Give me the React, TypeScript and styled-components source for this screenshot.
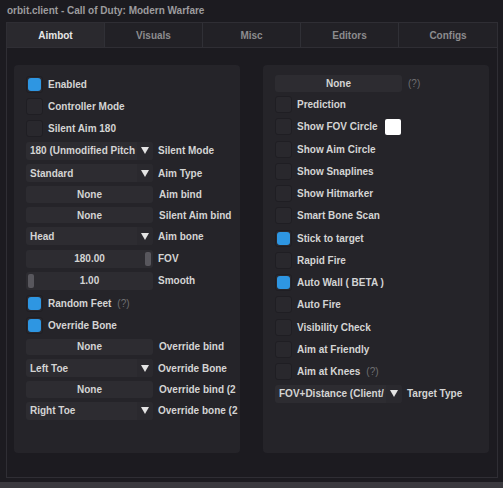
import React from "react";
import styled, { createGlobalStyle } from "styled-components";

const GlobalStyle = createGlobalStyle`
  html, body { margin: 0; padding: 0; background: #1c1b20; }
  body { font-family: "Liberation Sans", Arial, sans-serif; font-weight: 700; font-size: 10px; color: #d4d4d4; }
  * { box-sizing: border-box; }
`;

const Window = styled.div`
  width: 503px;
  height: 488px;
  display: flex;
  flex-direction: column;
  background: #1c1b20;
  overflow: hidden;
`;

const TitleBar = styled.div`
  height: 22px;
  padding-left: 7px;
  line-height: 22px;
  color: #9c9c9e;
  white-space: nowrap;
`;

const Frame = styled.div`
  margin: 0 5px 0 6px;
  height: 458px;
  border: 1px solid #2f2e34;
  display: flex;
  flex-direction: column;
`;

const TabBar = styled.div`
  display: grid;
  grid-template-columns: repeat(5, 1fr);
  height: 25px;
  border-bottom: 1px solid #2f2e34;
`;

const Tab = styled.div<{ $active?: boolean }>`
  display: flex;
  align-items: center;
  justify-content: center;
  background: ${(p) => (p.$active ? "#2a292e" : "#222126")};
  color: ${(p) => (p.$active ? "#e6e6e6" : "#8c8c8e")};
  border-right: 1px solid #303036;
  &:last-child { border-right: none; }
`;

const Content = styled.div`
  display: flex;
  gap: 23px;
  padding: 17px 0 0 7px;
`;

const Panel = styled.div`
  width: 226px;
  height: 388px;
  background: #252429;
  border-radius: 4px;
  padding: 10px 2px 0 12px;
  display: flex;
  flex-direction: column;
  gap: 4px;
  overflow: hidden;
`;

const Row = styled.div<{ $h?: number }>`
  height: ${(p) => p.$h ?? 18.25}px;
  display: flex;
  align-items: center;
  white-space: nowrap;
  flex-shrink: 0;
`;

const Box = styled.div`
  width: 17px;
  height: 17px;
  border-radius: 3px;
  background: #29282d;
  border: 1px solid #1f1e23;
  display: flex;
  align-items: center;
  justify-content: center;
  flex-shrink: 0;
`;

const Tick = styled.div`
  width: 13px;
  height: 13px;
  border-radius: 3px;
  background: #2e96e2;
`;

const CheckLabel = styled.span`
  margin-left: 5px;
`;

const Help = styled.span`
  margin-left: 6px;
  color: #6f6f72;
  font-weight: 400;
`;

const Swatch = styled.div`
  margin-left: 7px;
  width: 16px;
  height: 16px;
  border-radius: 2px;
  background: #ffffff;
`;

const WidgetLabel = styled.span<{ $offset?: number }>`
  margin-left: ${(p) => p.$offset ?? 5}px;
`;

const ButtonFrame = styled.div`
  width: 127px;
  height: 16.5px;
  background: #2d2c31;
  border-radius: 3px;
  display: flex;
  align-items: center;
  justify-content: center;
  flex-shrink: 0;
`;

const ComboFrame = styled.div`
  width: 127px;
  height: 18px;
  background: #2d2c31;
  border-radius: 3px;
  display: flex;
  align-items: center;
  flex-shrink: 0;
  overflow: hidden;
`;

const ComboText = styled.span`
  flex: 1;
  min-width: 0;
  padding-left: 4px;
  overflow: hidden;
  white-space: nowrap;
`;

const ComboArrow = styled.div`
  width: 16px;
  height: 18px;
  background: #2a292e;
  display: flex;
  align-items: center;
  justify-content: center;
  flex-shrink: 0;
`;

const SliderFrame = styled.div`
  position: relative;
  width: 127px;
  height: 18px;
  background: #2d2c31;
  border-radius: 3px;
  display: flex;
  align-items: center;
  justify-content: center;
  flex-shrink: 0;
`;

const Grab = styled.div<{ $right?: boolean }>`
  position: absolute;
  top: 2px;
  ${(p) => (p.$right ? "right: 2px;" : "left: 2px;")}
  width: 6px;
  height: 14px;
  border-radius: 2px;
  background: #58575d;
`;

const Strip = styled.div`
  margin-top: 4px;
  height: 6px;
  background: #3a393e;
`;

const Arrow = () => (
  <svg width="8" height="7" viewBox="0 0 8 7">
    <polygon points="0,0 8,0 4,7" fill="#e4e4e4" />
  </svg>
);

const Check = ({ label, checked, help, swatch }: { label: string; checked?: boolean; help?: boolean; swatch?: boolean }) => (
  <Row>
    <Box>{checked && <Tick />}</Box>
    <CheckLabel>{label}</CheckLabel>
    {help && <Help>(?)</Help>}
    {swatch && <Swatch />}
  </Row>
);

const Button = ({ text, label, help }: { text: string; label?: string; help?: boolean }) => (
  <Row $h={16.5}>
    <ButtonFrame>{text}</ButtonFrame>
    {label && <WidgetLabel $offset={6}>{label}</WidgetLabel>}
    {help && <Help>(?)</Help>}
  </Row>
);

const Combo = ({ value, label }: { value: string; label: string }) => (
  <Row>
    <ComboFrame>
      <ComboText>{value}</ComboText>
      <ComboArrow>
        <Arrow />
      </ComboArrow>
    </ComboFrame>
    <WidgetLabel>{label}</WidgetLabel>
  </Row>
);

const Slider = ({ value, label, right }: { value: string; label: string; right?: boolean }) => (
  <Row>
    <SliderFrame>
      <Grab $right={right} />
      {value}
    </SliderFrame>
    <WidgetLabel>{label}</WidgetLabel>
  </Row>
);

export default function App() {
  const tabs = ["Aimbot", "Visuals", "Misc", "Editors", "Configs"];
  return (
    <Window>
      <GlobalStyle />
      <TitleBar>orbit.client - Call of Duty: Modern Warfare</TitleBar>
      <Frame>
        <TabBar>
          {tabs.map((t, i) => (
            <Tab key={t} $active={i === 0}>
              {t}
            </Tab>
          ))}
        </TabBar>
        <Content>
          <Panel>
            <Check label="Enabled" checked />
            <Check label="Controller Mode" />
            <Check label="Silent Aim 180" />
            <Combo value="180 (Unmodified Pitch" label="Silent Mode" />
            <Combo value="Standard" label="Aim Type" />
            <Button text="None" label="Aim bind" />
            <Button text="None" label="Silent Aim bind" />
            <Combo value="Head" label="Aim bone" />
            <Slider value="180.00" label="FOV" right />
            <Slider value="1.00" label="Smooth" />
            <Check label="Random Feet" checked help />
            <Check label="Override Bone" checked />
            <Button text="None" label="Override bind" />
            <Combo value="Left Toe" label="Override Bone" />
            <Button text="None" label="Override bind (2" />
            <Combo value="Right Toe" label="Override bone (2" />
          </Panel>
          <Panel>
            <Button text="None" help />
            <Check label="Prediction" />
            <Check label="Show FOV Circle" swatch />
            <Check label="Show Aim Circle" />
            <Check label="Show Snaplines" />
            <Check label="Show Hitmarker" />
            <Check label="Smart Bone Scan" />
            <Check label="Stick to target" checked />
            <Check label="Rapid Fire" />
            <Check label="Auto Wall ( BETA )" checked />
            <Check label="Auto Fire" />
            <Check label="Visibility Check" />
            <Check label="Aim at Friendly" />
            <Check label="Aim at Knees" help />
            <Combo value="FOV+Distance (Client/" label="Target Type" />
          </Panel>
        </Content>
      </Frame>
      <Strip />
    </Window>
  );
}
